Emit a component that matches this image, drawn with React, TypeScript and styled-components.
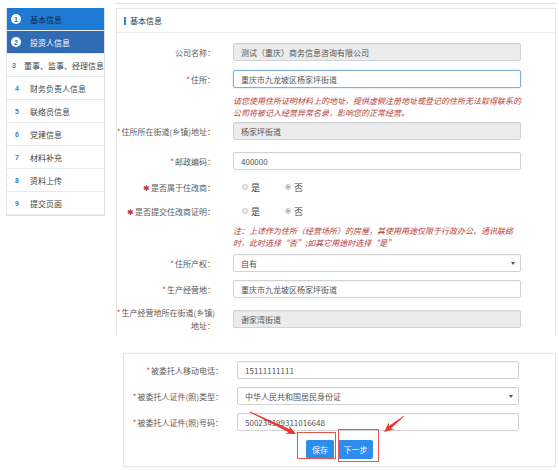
import React from "react";
import styled, { createGlobalStyle } from "styled-components";

const GlobalStyle = createGlobalStyle`
  html, body {
    margin: 0;
    background: #fff;
    font-family: "Noto Sans CJK SC", "Noto Sans", sans-serif;
  }
`;

const Page = styled.div`
  position: relative;
  width: 559px;
  height: 470px;
  overflow: hidden;
`;

const TopSection = styled.div`
  display: flex;
  align-items: flex-start;
  height: 335px;
  overflow: hidden;
`;

const Sidebar = styled.ul`
  list-style: none;
  margin: 8px 0 0 6px;
  padding: 0;
  width: 99px;
  border: 1px solid #dfe3e8;
  border-top: none;
  box-sizing: border-box;
`;

const NavItem = styled.li<{ $variant?: "active" | "current" }>`
  display: flex;
  align-items: center;
  height: 23px;
  box-sizing: border-box;
  border-bottom: 1px solid #e6e9ee;
  padding-left: 3px;
  font-size: 8px;
  white-space: nowrap;
  overflow: hidden;
  background: ${(p) =>
    p.$variant === "active" ? "#1e7ad2" : p.$variant === "current" ? "#2f6cb3" : "#fff"};
  color: ${(p) =>
    p.$variant === "active" ? "#10294d" : p.$variant === "current" ? "#fff" : "#444"};
`;

const Circle = styled.span`
  width: 10px;
  height: 10px;
  border-radius: 50%;
  background: #fff;
  color: #1e6fc0;
  font-size: 7px;
  font-weight: bold;
  display: flex;
  align-items: center;
  justify-content: center;
  margin: 0 9px 0 1px;
  font-family: "Liberation Sans", sans-serif;
`;

const Num = styled.span`
  width: 12px;
  margin: 0 7px 0 1px;
  text-align: center;
  color: #3b7fc6;
  font-size: 7px;
  font-weight: bold;
  font-family: "Liberation Sans", sans-serif;
`;

const Main = styled.div`
  margin: 3px 0 0 10px;
  width: 441px;
  height: 340px;
  border-top: 1px solid #e2e2e2;
  box-sizing: border-box;
`;

const Panel = styled.div<{ $cut?: boolean }>`
  border: 1px solid #e7e7e7;
  ${(p) => (p.$cut ? "border-bottom: none; margin: 4px 0 0 1px; height: 400px;" : "")}
  box-sizing: border-box;
  background: #fff;
`;

const PanelHead = styled.div`
  display: flex;
  align-items: center;
  height: 23px;
  border-bottom: 1px solid #ececec;
  padding-left: 7px;
  font-size: 8px;
  color: #333;
  &::before {
    content: "";
    width: 2px;
    height: 8px;
    background: #2f86d8;
    margin-right: 4px;
  }
`;

const FormBody = styled.div<{ $pt: number }>`
  padding-top: ${(p) => p.$pt}px;
  display: flex;
  flex-direction: column;
`;

const Row = styled.div<{ $mt?: number; $labelW: number; $gap: number; $h?: number }>`
  display: flex;
  align-items: center;
  margin-top: ${(p) => p.$mt ?? 0}px;
  min-height: ${(p) => p.$h ?? 18}px;
  & > label {
    width: ${(p) => p.$labelW}px;
    margin-right: ${(p) => p.$gap}px;
  }
`;

const Label = styled.label`
  flex: none;
  display: flex;
  flex-direction: column;
  align-items: flex-end;
  text-align: right;
  font-size: 8px;
  line-height: 13px;
  color: #5a5a5a;
  white-space: nowrap;
`;

const Star = styled.span<{ $big?: boolean }>`
  color: ${(p) => (p.$big ? "#c0392b" : "#e0362e")};
  font-size: 8px;
  margin-right: 1px;
`;

const Field = styled.div<{ $w: number; $disabled?: boolean; $focus?: boolean }>`
  position: relative;
  width: ${(p) => p.$w}px;
  height: 18px;
  box-sizing: border-box;
  border: 1px solid ${(p) => (p.$focus ? "#7eaee0" : "#d2d2d2")};
  border-radius: 2px;
  background: ${(p) => (p.$disabled ? "#ececec" : "#fff")};
  box-shadow: ${(p) => (p.$focus ? "0 0 2px rgba(102,175,233,0.5)" : "inset 0 1px 1px rgba(0,0,0,0.04)")};
  display: flex;
  align-items: center;
  padding-left: 7px;
  font-size: 8px;
  color: #555;
`;

const Caret = styled.span`
  position: absolute;
  right: 5px;
  top: 7px;
  border-left: 2px solid transparent;
  border-right: 2px solid transparent;
  border-top: 3px solid #555;
`;

const Note = styled.p<{ $mt: number; $ml: number }>`
  margin: ${(p) => p.$mt}px 0 0 ${(p) => p.$ml}px;
  font-size: 8px;
  line-height: 12px;
  font-style: italic;
  color: #b3403c;
  white-space: nowrap;
`;

const RadioGroup = styled.div`
  display: flex;
  align-items: center;
  padding-left: 9px;
  gap: 25px;
`;

const RadioOpt = styled.span<{ $checked?: boolean }>`
  display: flex;
  align-items: center;
  font-size: 9px;
  color: #444;
  &::before {
    content: "";
    width: 6px;
    height: 6px;
    border-radius: 50%;
    border: 1px solid #c4c4c4;
    margin-right: 3px;
    box-sizing: border-box;
    background: ${(p) => (p.$checked ? "#fff" : "#f2f2f2")};
    box-shadow: ${(p) => (p.$checked ? "inset 0 0 0 1px #fff, inset 0 0 0 3px #777" : "none")};
  }
`;

const BottomPanel = styled(Panel)`
  margin: 18px 0 0 123px;
  width: 433px;
  height: 114px;
  box-shadow: 0 0 2px rgba(0, 0, 0, 0.06);
`;

const Buttons = styled.div`
  display: flex;
  justify-content: center;
  gap: 4px;
  margin-top: 9px;
`;

const Btn = styled.button<{ $w: number }>`
  width: ${(p) => p.$w}px;
  height: 19px;
  border: none;
  border-radius: 2px;
  background: #2d8cf0;
  color: #fff;
  font-size: 8px;
  font-family: inherit;
  padding: 0;
`;

const Mark = styled.div<{ $x: number; $y: number; $w: number; $h: number }>`
  position: absolute;
  left: ${(p) => p.$x}px;
  top: ${(p) => p.$y}px;
  width: ${(p) => p.$w}px;
  height: ${(p) => p.$h}px;
  border: 1px solid #e8544e;
  box-sizing: border-box;
  pointer-events: none;
`;

const Overlay = styled.svg`
  position: absolute;
  left: 0;
  top: 0;
  pointer-events: none;
`;

function arrow(x1: number, y1: number, x2: number, y2: number) {
  const dx = x2 - x1;
  const dy = y2 - y1;
  const L = Math.hypot(dx, dy);
  const ux = dx / L;
  const uy = dy / L;
  const nx = -uy;
  const ny = ux;
  const hl = 10;
  const hw = 4.5;
  const nw = 1.6;
  const tw = 0.4;
  const bx = x2 - ux * hl;
  const by = y2 - uy * hl;
  const cx = x2 - ux * (hl - 2.5);
  const cy = y2 - uy * (hl - 2.5);
  const pts = [
    [x1 + nx * tw, y1 + ny * tw],
    [cx + nx * nw, cy + ny * nw],
    [bx + nx * hw, by + ny * hw],
    [x2, y2],
    [bx - nx * hw, by - ny * hw],
    [cx - nx * nw, cy - ny * nw],
    [x1 - nx * tw, y1 - ny * tw],
  ];
  return pts.map((p) => p.map((v) => v.toFixed(1)).join(",")).join(" ");
}

const navItems = [
  "董事、监事、经理信息",
  "财务负责人信息",
  "联络员信息",
  "党建信息",
  "材料补充",
  "资料上传",
  "提交页面",
];

const TL = 98;
const TG = 18;
const FW = 288;

const App = () => {
  return (
    <>
      <GlobalStyle />
      <Page>
        <TopSection>
          <Sidebar>
            <NavItem $variant="active">
              <Circle>1</Circle>基本信息
            </NavItem>
            <NavItem $variant="current">
              <Circle>2</Circle>投资人信息
            </NavItem>
            {navItems.map((t, i) => (
              <NavItem key={t}>
                <Num>{i + 3}</Num>
                {t}
              </NavItem>
            ))}
          </Sidebar>
          <Main>
            <Panel $cut>
              <PanelHead>基本信息</PanelHead>
              <FormBody $pt={10}>
                <Row $labelW={TL} $gap={TG}>
                  <Label>公司名称：</Label>
                  <Field $w={FW} $disabled>
                    测试（重庆）商务信息咨询有限公司
                  </Field>
                </Row>
                <Row $labelW={TL} $gap={TG} $mt={9}>
                  <Label>
                    <span>
                      <Star>*</Star>住所：
                    </span>
                  </Label>
                  <Field $w={FW} $focus>
                    重庆市九龙坡区杨家坪街道
                  </Field>
                </Row>
                <Note $mt={7} $ml={TL + TG}>
                  请您使用住所证明材料上的地址，提供虚假注册地址或登记的住所无法取得联系的
                  <br />
                  公司将被记入经营异常名录，影响您的正常经营。
                </Note>
                <Row $labelW={TL} $gap={TG} $mt={3}>
                  <Label>
                    <span>
                      <Star>*</Star>住所所在街道(乡镇)地址：
                    </span>
                  </Label>
                  <Field $w={FW} $disabled>
                    杨家坪街道
                  </Field>
                </Row>
                <Row $labelW={TL} $gap={TG} $mt={12}>
                  <Label>
                    <span>
                      <Star>*</Star>邮政编码：
                    </span>
                  </Label>
                  <Field $w={FW}>400000</Field>
                </Row>
                <Row $labelW={TL} $gap={TG} $mt={8}>
                  <Label>
                    <span>
                      <Star $big>✱</Star>是否属于住改商：
                    </span>
                  </Label>
                  <RadioGroup>
                    <RadioOpt>是</RadioOpt>
                    <RadioOpt $checked>否</RadioOpt>
                  </RadioGroup>
                </Row>
                <Row $labelW={TL} $gap={TG} $mt={6}>
                  <Label>
                    <span>
                      <Star $big>✱</Star>是否提交住改商证明：
                    </span>
                  </Label>
                  <RadioGroup>
                    <RadioOpt>是</RadioOpt>
                    <RadioOpt $checked>否</RadioOpt>
                  </RadioGroup>
                </Row>
                <Note $mt={5} $ml={TL + TG}>
                  注：上述作为住所（经营场所）的房屋，其使用用途仅限于行政办公、通讯联络
                  <br />
                  时，此时选择“否”;如其它用途时选择“是”
                </Note>
                <Row $labelW={TL} $gap={TG} $mt={5}>
                  <Label>
                    <span>
                      <Star>*</Star>住所产权：
                    </span>
                  </Label>
                  <Field $w={FW}>
                    自有
                    <Caret />
                  </Field>
                </Row>
                <Row $labelW={TL} $gap={TG} $mt={8}>
                  <Label>
                    <span>
                      <Star>*</Star>生产经营地：
                    </span>
                  </Label>
                  <Field $w={FW}>重庆市九龙坡区杨家坪街道</Field>
                </Row>
                <Row $labelW={TL} $gap={TG} $mt={8}>
                  <Label>
                    <span>
                      <Star>*</Star>生产经营地所在街道(乡镇)
                    </span>
                    <span>地址：</span>
                  </Label>
                  <Field $w={FW} $disabled>
                    谢家湾街道
                  </Field>
                </Row>
              </FormBody>
            </Panel>
          </Main>
        </TopSection>

        <BottomPanel>
          <FormBody $pt={7}>
            <Row $labelW={99} $gap={14}>
              <Label>
                <span>
                  <Star>*</Star>被委托人移动电话：
                </span>
              </Label>
              <Field $w={282}>15111111111</Field>
            </Row>
            <Row $labelW={99} $gap={14} $mt={8}>
              <Label>
                <span>
                  <Star>*</Star>被委托人证件(照)类型：
                </span>
              </Label>
              <Field $w={282}>
                中华人民共和国居民身份证
                <Caret />
              </Field>
            </Row>
            <Row $labelW={99} $gap={14} $mt={8}>
              <Label>
                <span>
                  <Star>*</Star>被委托人证件(照)号码：
                </span>
              </Label>
              <Field $w={282}>500234199311016648</Field>
            </Row>
            <Buttons>
              <Btn $w={28}>保存</Btn>
              <Btn $w={35}>下一步</Btn>
            </Buttons>
          </FormBody>
        </BottomPanel>

        <Mark $x={297} $y={432} $w={39} $h={27} />
        <Mark $x={338} $y={429} $w={41} $h={33} />
        <Overlay width="559" height="470" viewBox="0 0 559 470">
          <polygon points={arrow(250, 412, 296, 434)} fill="#e8372f" />
          <polygon points={arrow(404, 416, 384, 432)} fill="#e8372f" />
        </Overlay>
      </Page>
    </>
  );
};

export default App;
